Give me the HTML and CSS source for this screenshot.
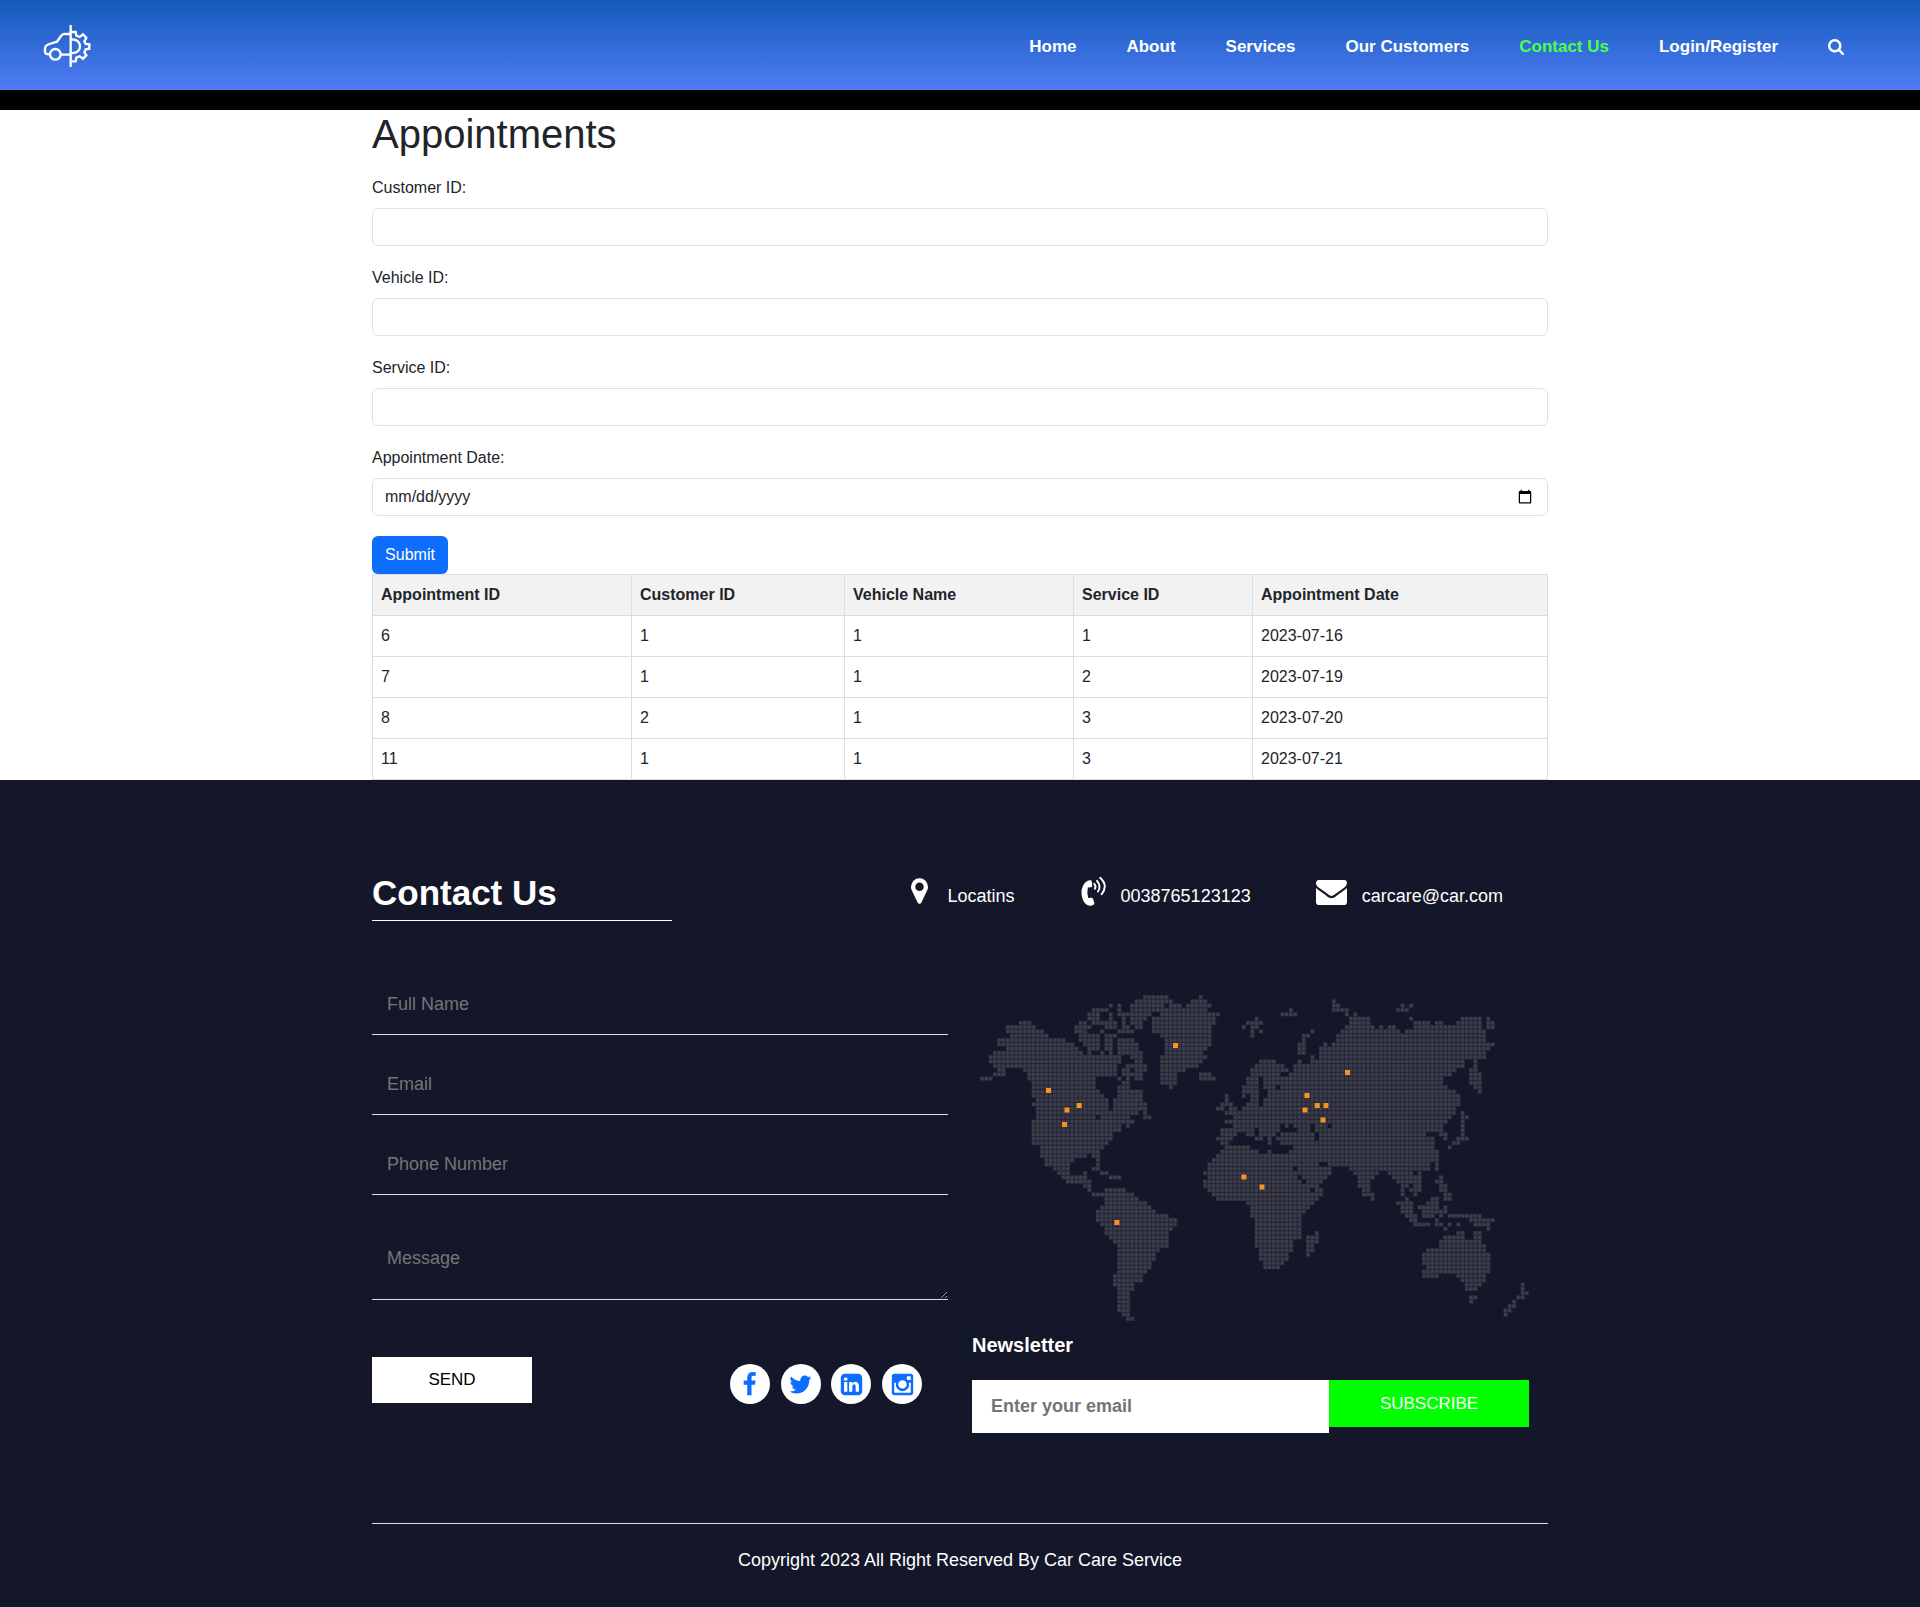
FILE: index.html
```html
<!DOCTYPE html>
<html lang="en">
<head>
<meta charset="utf-8">
<title>Car Care Service</title>
<link rel="stylesheet" href="styles.css">
</head>
<body>
<header class="header">
  <a class="logo" href="#" aria-label="Car Care">
    <svg viewBox="0 0 240 180" width="80" height="60" fill="none" stroke="#fff" stroke-width="7">
      <path d="M122 30V156M122 57H103Q97 57 93 63L81 80L58 87Q45 91 45 102V111Q45 118 58 118M92 119H122"/>
      <circle cx="76" cy="118" r="16"/>
      <path d="M122 74C141 71 150 82 150 94S141 116 122 114"/>
      <path d="M122 51H137L139 62L149 66L159 58L169 69L163 79L167 87L178 88V101L167 103L163 112L169 121L159 131L149 124L139 128L137 139H122"/>
    </svg>
  </a>
  <nav class="nav">
    <a href="#">Home</a>
    <a href="#">About</a>
    <a href="#">Services</a>
    <a href="#">Our Customers</a>
    <a href="#" class="active">Contact Us</a>
    <a href="#">Login/Register</a>
    <a href="#" class="search" aria-label="Search"><svg viewBox="64 128 1664 1664" width="16" height="16" fill="currentColor"><path d="M1216 832q0-185-131.5-316.5t-316.5-131.5-316.5 131.5-131.5 316.5 131.5 316.5 316.5 131.5 316.5-131.5 131.5-316.5zm512 832q0 52-38 90t-90 38q-54 0-90-38l-343-342q-179 124-399 124-143 0-273.5-55.5t-225-150-150-225-55.5-273.5 55.5-273.5 150-225 225-150 273.5-55.5 273.5 55.5 225 150 150 225 55.5 273.5q0 220-124 399l343 343q37 37 37 90z"/></svg></a>
  </nav>
</header>
<div class="strip"></div>

<main class="container">
  <h1 class="title">Appointments</h1>
  <form>
    <div class="group"><label for="customer">Customer ID:</label><input class="control" id="customer" type="text"></div>
    <div class="group"><label for="vehicle">Vehicle ID:</label><input class="control" id="vehicle" type="text"></div>
    <div class="group"><label for="service">Service ID:</label><input class="control" id="service" type="text"></div>
    <div class="group"><label for="date">Appointment Date:</label><input class="control" id="date" type="date"></div>
    <button class="submit" type="button">Submit</button>
  </form>
  <table class="table">
    <colgroup><col class="c1"><col class="c2"><col class="c3"><col class="c4"><col class="c5"></colgroup>
    <tr><th>Appointment ID</th><th>Customer ID</th><th>Vehicle Name</th><th>Service ID</th><th>Appointment Date</th></tr>
    <tr><td>6</td><td>1</td><td>1</td><td>1</td><td>2023-07-16</td></tr>
    <tr><td>7</td><td>1</td><td>1</td><td>2</td><td>2023-07-19</td></tr>
    <tr><td>8</td><td>2</td><td>1</td><td>3</td><td>2023-07-20</td></tr>
    <tr><td>11</td><td>1</td><td>1</td><td>3</td><td>2023-07-21</td></tr>
  </table>
</main>

<footer class="footer">
  <div class="container">
    <div class="contact-head">
      <h2>Contact Us</h2>
      <ul class="contact-list">
        <li><svg class="pin" viewBox="0 0 1024 1536" width="17" height="26" fill="#fff"><path d="M768 512q0-106-75-181t-181-75-181 75-75 181 75 181 181 75 181-75 75-181zm256 0q0 109-33 179l-364 774q-16 33-47.500 52t-67.500 19-67.500-19-46.500-52l-365-774q-33-70-33-179 0-212 150-362t362-150 362 150 150 362z"/></svg>Locatins</li>
        <li><svg class="phone" viewBox="0 0 25 30" width="25" height="30" fill="#fff"><path d="M8.500 4.200L10.500 4.500Q11.300 7 11.200 10.200Q11 11 10 11.200L6.800 11.500Q5.700 17 7.200 22L10.600 21.700Q11.500 21.700 11.900 22.500L13.400 27Q13.500 28 12.500 28.700Q10.500 30 7.500 29.500C3 28 .5 22.500.5 16.500C.5 11 3.500 5 8.500 4.200Z"/><g fill="none" stroke="#fff" stroke-width="1.900" stroke-linecap="round"><path d="M13.200 7.800Q15.400 10 13.900 12.700"/><path d="M16 4.800Q20.500 10 17 15.600"/><path d="M19.200 1.800Q27.500 9.500 20.700 18.200"/></g></svg>0038765123123</li>
        <li><svg class="mail" viewBox="0 256 1792 1408" width="31" height="25" preserveAspectRatio="none" fill="#fff"><path d="M1792 710v794q0 66-47 113t-113 47h-1472q-66 0-113-47t-47-113v-794q44 49 101 87 362 246 497 345 57 42 92.500 65.500t94.500 48 110 24.500h2q51 0 110-24.500t94.500-48 92.500-65.500q170-123 498-345 57-39 100-87zm0-294q0 79-49 151t-122 123q-376 261-468 325-10 7-42.500 31t-54 38.500-52 32.500-57.500 27-50 9h-2q-23 0-50-9t-57.500-27-52-32.500-54-38.500-42.500-31q-91-64-262-182.500t-205-142.500q-62-42-117-115.500t-55-136.500q0-78 41.500-130t118.500-52h1472q65 0 112.500 47t47.500 113z"/></svg>carcare@car.com</li>
      </ul>
    </div>
    <div class="columns">
      <form class="contact-form">
        <input type="text" placeholder="Full Name">
        <input type="text" placeholder="Email">
        <input type="text" placeholder="Phone Number">
        <textarea placeholder="Message"></textarea>
        <div class="actions">
          <button class="send" type="button">SEND</button>
          <div class="social">
            <a href="#" aria-label="Facebook"><svg viewBox="0 0 1792 1792" width="25" height="25" fill="currentColor"><path d="M1343 12v264h-157q-86 0-116 36t-30 108v189h293l-39 296h-254v759h-306v-759h-255v-296h255v-218q0-186 104-288.500t277-102.500q147 0 228 12z"/></svg></a>
            <a href="#" aria-label="Twitter"><svg viewBox="0 0 1792 1792" width="25" height="25" fill="currentColor"><path d="M1684 408q-67 98-162 167 1 14 1 42 0 130-38 259.500t-115.500 248.500-184.500 210.500-258 146-323 54.500q-271 0-496-145 35 4 78 4 225 0 401-138-105-2-188-64.500t-114-159.500q33 5 61 5 43 0 85-11-112-23-185.500-111.500t-73.500-205.500v-4q68 38 146 41-66-44-105-115t-39-154q0-88 44-163 121 149 294.500 238.500t371.500 99.500q-8-38-8-74 0-134 94.500-228.500t228.500-94.500q140 0 236 102 109-21 205-78-37 115-142 178 93-10 186-50z"/></svg></a>
            <a href="#" aria-label="LinkedIn"><svg viewBox="0 0 1792 1792" width="25" height="25" fill="currentColor"><path d="M365 1414h231v-694h-231v694zm246-908q-1-52-36-86t-93-34-94.500 34-36.500 86q0 51 35.500 85.500t92.500 34.500h1q59 0 95-34.500t36-85.500zm585 908h231v-398q0-154-73-233t-193-79q-136 0-209 117h2v-101h-231q3 66 0 694h231v-388q0-38 7-56 15-35 45-59.500t74-24.500q116 0 116 157v371zm468-998v960q0 119-84.500 203.500t-203.500 84.500h-960q-119 0-203.500-84.500t-84.500-203.500v-960q0-119 84.500-203.500t203.500-84.500h960q119 0 203.500 84.500t84.500 203.500z"/></svg></a>
            <a href="#" aria-label="Instagram"><svg viewBox="0 0 25 25" width="25" height="25" fill="currentColor"><path fill-rule="evenodd" d="M4.500 1.800H20.500Q23.200 1.800 23.200 4.500V20.500Q23.200 23.200 20.500 23.200H4.500Q1.800 23.200 1.800 20.500V4.500Q1.800 1.800 4.500 1.800ZM17.600 4.200Q16.800 4.200 16.800 5V7.300Q16.800 8.100 17.600 8.100H20Q20.800 8.100 20.800 7.300V5Q20.800 4.200 20 4.200ZM4.200 10.800V20Q4.200 20.800 5 20.800H20Q20.800 20.800 20.800 20V10.800H18.900A6.700 6.500 0 1 1 6.100 10.800ZM12.500 8.200A4.300 4.200 0 1 0 12.500 16.600A4.300 4.200 0 1 0 12.500 8.200Z"/></svg></a>
          </div>
        </div>
      </form>
      <div class="aside">
        <svg class="map" id="map" viewBox="0 0 557 340" width="557" height="340" role="img" aria-label="World map">
          <g transform="translate(8.300 10) scale(4.290)" fill="none">
            <path class="land-base"/>
            <path class="land-dots"/>
          </g>
          <g class="places"></g>
        </svg>
        <h3>Newsletter</h3>
        <form class="newsletter">
          <input type="text" placeholder="Enter your email">
          <button type="button">SUBSCRIBE</button>
        </form>
      </div>
    </div>
    <p class="copyright">Copyright 2023 All Right Reserved By Car Care Service</p>
  </div>
</footer>
<script src="map.js"></script>
</body>
</html>
```
FILE: styles.css
```css
*, *::before, *::after { box-sizing: border-box; }
body {
  margin: 0;
  font-family: Arial, "Liberation Sans", sans-serif;
  font-size: 16px;
  line-height: 24px;
  color: #212529;
  background: #fff;
}
h1, h2, h3, p, ul { margin: 0; padding: 0; }
a { text-decoration: none; }
input, button, textarea { font-family: inherit; margin: 0; }
svg { display: block; }
.container { width: 1176px; margin: 0 auto; }

.header {
  height: 90px;
  padding: 0 76px 0 30px;
  display: flex;
  align-items: center;
  justify-content: space-between;
  background: linear-gradient(#145ab8, #4f7cf5);
}
.nav { display: flex; align-items: center; gap: 50px; padding-top: 4px; }
.nav a { color: #fff; font-size: 17px; font-weight: bold; }
.nav .active { color: #4cff4c; }
.nav .search { padding-bottom: 1px; }
.strip { height: 20px; background: #000; }

.title { font-size: 40px; font-weight: 400; line-height: 48px; margin-bottom: 18px; }
.group { margin-bottom: 20px; }
.group label { display: block; margin-bottom: 8px; }
.control {
  display: block;
  width: 100%;
  height: 38px;
  padding: 6px 12px;
  font-size: 16px;
  line-height: 24px;
  color: #212529;
  background: #fff;
  border: 1px solid #dee2e6;
  border-radius: 6px;
}
.control::-webkit-datetime-edit-month-field,
.control::-webkit-datetime-edit-day-field,
.control::-webkit-datetime-edit-year-field { padding: 0; }
.submit {
  display: block;
  width: 76px;
  height: 38px;
  padding: 0;
  font-size: 16px;
  color: #fff;
  background: #0d6efd;
  border: 0;
  border-radius: 6px;
}
.table { width: 1176px; table-layout: fixed; border-collapse: collapse; }
.table th, .table td { height: 41px; padding: 8px; text-align: left; border: 1px solid #ddd; }
.table th { background: #f2f2f2; }
.c1 { width: 259px; }
.c2 { width: 213px; }
.c3 { width: 229px; }
.c4 { width: 179px; }
.c5 { width: 295px; }

.footer { height: 827px; padding-top: 90px; background: #141729; color: #fff; }
.contact-head { display: flex; justify-content: space-between; height: 51px; }
.contact-head h2 {
  width: 300px;
  height: 51px;
  font-size: 35px;
  line-height: 45px;
  border-bottom: 1px solid #fff;
}
.contact-list { display: flex; list-style: none; padding-right: 45px; font-size: 18px; line-height: 53px; }
.contact-list li { display: flex; align-items: flex-start; }
.contact-list .pin { margin: 8px 20px 0 0; }
.contact-list .phone { margin: 6px 15px 0 66px; }
.contact-list .mail { margin: 10px 15px 0 65px; }

.columns { display: grid; grid-template-columns: 576px 557px; gap: 24px; height: 602px; }
.contact-form { padding-top: 54px; }
.contact-form input, .contact-form textarea {
  display: block;
  width: 100%;
  height: 60px;
  margin-bottom: 20px;
  padding: 0 15px;
  font-size: 18px;
  color: #fff;
  background: transparent;
  border: 0;
  border-bottom: 1px solid #ddd;
}
.contact-form textarea { height: 85px; margin-bottom: 57px; padding-top: 33px; }
::placeholder { color: #757575; opacity: 1; }
.actions { display: flex; justify-content: space-between; align-items: flex-start; padding-right: 26px; }
.send { width: 160px; height: 46px; font-size: 17px; background: #fff; color: #000; border: 0; }
.social { display: flex; gap: 10.700px; padding-top: 7px; }
.social a {
  display: flex;
  align-items: center;
  justify-content: center;
  width: 40px;
  height: 40px;
  border-radius: 50%;
  color: #0d6efd;
  background: #fff;
}

.aside { padding-top: 64px; }
.aside h3 { font-size: 20px; line-height: 24px; margin: 8px 0 23px; }
.land-base { stroke: #242636; stroke-width: 1; }
.land-dots { stroke: #3d3e49; stroke-width: .75; stroke-dasharray: .75 .25; }
.places { fill: #f7941e; }
.newsletter { display: flex; align-items: flex-start; }
.newsletter input {
  width: 357px;
  height: 53px;
  padding: 0 19px;
  font-size: 18px;
  font-weight: bold;
  border: 0;
  background: #fff;
}
.newsletter button { width: 200px; height: 47px; font-size: 17px; color: #fff; background: #0f0; border: 0; }
.copyright {
  border-top: 1px solid #ddd;
  padding-top: 24px;
  font-size: 18px;
  text-align: center;
}
```
FILE: map.js
```js
// Land cells of the dotted map, one entry per grid row, as start-end column runs.
const rows = `38-44 51-52
36-45 49-53 82-83
30-31 32-33 35-43 44-47 48-54 82-84 98-99 100-101
26-30 32-33 35-53 72-73 82-86 97-100
25-28 30-31 32-40 42-56 70-74 85-86 87-88
25-28 30-31 33-34 35-39 40-55 64-65 86-91 100-101 112-117 118-119
9-12 23-25 26-32 33-34 35-38 40-55 62-66 86-91 101-105 106-108 111-117 118-120
6-13 22-26 29-32 33-35 36-38 40-54 61-62 63-65 85-92 93-94 95-97 101-117 118-120
6-15 22-25 28-29 32-36 40-54 63-64 65-66 77-78 84-98 99-118
7-16 23-28 29-32 42-54 63-64 75-77 83-118
4-20 23-28 29-31 32-36 43-54 75-76 83-118
4-22 24-28 29-31 32-37 43-54 74-76 80-81 82-120
6-23 25-28 29-31 32-37 43-53 74-76 79-119
3-24 25-26 28-29 30-31 32-38 43-52 74-76 79-118
2-33 35-38 42-53 77-78 79-118
2-33 36-38 42-52 65-69 74-75 77-113 115-116
3-32 34-39 42-51 64-71 73-113 115-116
4-6 10-32 33-35 36-39 42-48 63-72 73-111 114-116
3-6 11-32 33-38 42-46 51-54 63-70 72-110 114-117
0-3 11-27 32-33 34-35 36-38 42-46 51-55 62-65 66-108 114-117
12-27 33-35 42-46 62-65 66-108 114-117
12-27 32-35 44-45 61-65 66-69 70-109 115-117
12-28 32-38 61-65 67-111 116-117
12-29 32-38 57-58 61-62 63-65 67-112
13-30 31-38 57-58 63-65 66-112
12-30 31-39 56-59 62-65 66-112
13-30 31-39 55-57 58-60 61-111
13-37 38-39 57-111 112-113
13-27 28-35 38-40 59-110 112-114
12-36 57-109 112-113
12-33 34-35 59-70 71-72 73-77 78-81 82-108 112-113
12-33 56-64 65-70 74-77 78-108 112-113
12-31 56-60 62-64 65-69 70-78 79-104 107-109 112-113
12-31 55-59 64-66 67-68 69-78 79-106 108-109 111-114
12-30 56-58 67-68 70-106 110-112
14-29 57-63 73-106 109-110
14-28 56-65 67-68 72-107
14-25 26-28 55-107
15-22 27-28 54-107
15-21 27-28 53-79 81-105 106-107
17-21 26-28 53-73 74-82 86-105 106-107
18-21 24-25 28-30 52-82 87-93 95-101 102-103
19-25 30-33 53-74 75-81 88-92 96-103 107-108
20-26 52-75 76-80 88-91 97-103 106-108
24-26 52-79 88-91 98-100 101-103 107-109
25-26 29-34 53-77 78-80 89-91 98-99 100-103 107-109
26-36 54-80 89-92 98-99 101-102 108-110
29-37 55-79 91-92 99-100 105-107 108-110
29-39 62-78 97-101 104-107
28-40 63-77 98-101 102-107 108-109
27-41 63-76 98-101 103-109
27-44 63-75 99-102 103-106 107-108 109-117
27-46 64-75 100-102 106-107 114-120
28-46 64-75 101-105 106-108 109-110 111-112 115-119
29-45 64-75 108-109 118-119
29-44 64-75 78-79 111-113 115-117
30-44 64-75 76-79 108-113 115-117
31-44 64-73 76-79 107-117
32-44 64-73 76-78 107-118
32-42 65-73 76-78 104-118
32-41 65-72 76-77 103-119
32-41 65-72 103-119
32-40 66-71 103-119
32-40 66-70 104-119
32-39 103-119
31-38 103-107 111-118
31-38 112-118
31-36 113-117 126-127
32-36 113-116 126-127
32-35 126-128
32-35 114-116 125-127
32-35 114-115 124-125
32-35 123-125
32-35 122-124
33-35 122-123
34-36`.split("\n");

// Highlighted places, as centre points in the map's own coordinates.
const places = [[76.5, 105.5], [95, 125], [107.2, 120.5], [92.5, 139.5], [203.5, 60.5],
  [144.9, 237.5], [271.9, 192], [290, 202], [335, 110.5], [333, 125], [345.2, 120.5],
  [353.9, 120.5], [351, 135], [375.5, 87.5]];

let d = "";
rows.forEach((row, y) => row.split(" ").forEach(run => {
  const [start, end] = run.split("-").map(Number);
  d += `M${start} ${y + 0.5}h${end - start}`;
}));
const map = document.getElementById("map");
map.querySelector(".land-base").setAttribute("d", d);
map.querySelector(".land-dots").setAttribute("d", d);
map.querySelector(".places").innerHTML = places
  .map(([x, y]) => `<rect x="${x - 2.5}" y="${y - 2.5}" width="5" height="5"/>`).join("");
```
